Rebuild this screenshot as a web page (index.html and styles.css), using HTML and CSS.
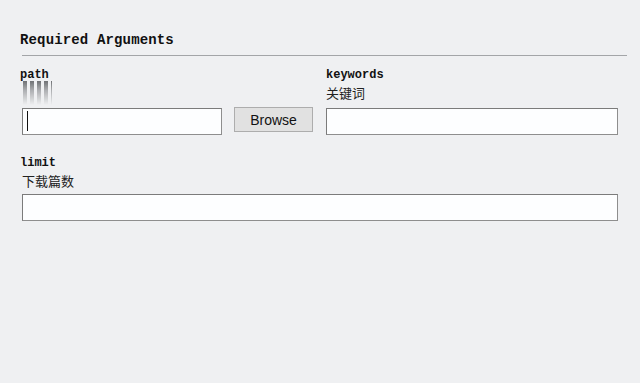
FILE: index.html
```html
<!DOCTYPE html>
<html>
<head>
<meta charset="utf-8">
<link rel="stylesheet" href="styles.css">
</head>
<body>
<div class="page">
  <div class="section-title">Required Arguments</div>
  <div class="rule"></div>
  <div class="row-top">
    <div class="field-head">
      <div class="label">path</div>
      <div class="smear"></div>
    </div>
    <div></div>
    <div class="field-head">
      <div class="label">keywords</div>
      <div class="help">关键词</div>
    </div>
    <div class="input-wrap">
      <input class="text-input" type="text">
      <span class="caret"></span>
    </div>
    <button class="browse">Browse</button>
    <input class="text-input" type="text">
  </div>
  <div class="row-limit">
    <div class="label">limit</div>
    <div class="help">下载篇数</div>
    <input class="text-input wide" type="text">
  </div>
</div>
</body>
</html>
```
FILE: styles.css
```css
html, body {
  margin: 0;
  padding: 0;
  background: #eff0f2;
}
.page {
  width: 640px;
  height: 383px;
  padding-top: 32px;
  box-sizing: border-box;
}
.section-title {
  margin-left: 20px;
  font-family: "Liberation Mono", monospace;
  font-weight: bold;
  font-size: 14px;
  line-height: 16px;
  letter-spacing: 0.15px;
  color: #111;
}
.rule {
  margin: 7px 13px 0 22px;
  height: 1px;
  background: #a3a5a8;
}
.row-top {
  margin: 12px 0 0 22px;
  display: grid;
  grid-template-columns: 200px 79px 292px;
  column-gap: 12px;
  grid-template-rows: 40px 27px;
  row-gap: 0;
}
.field-head {
  display: flex;
  flex-direction: column;
}
.row-top .field-head:nth-child(3) {
  margin-left: 1px;
}
.label {
  font-family: "Liberation Mono", monospace;
  font-weight: bold;
  font-size: 12px;
  line-height: 14px;
  color: #111;
  margin-left: -2px;
}
.row-top .field-head:nth-child(3) .label {
  margin-left: 0;
}
.help {
  margin-top: 3px;
  font-family: "Noto Sans CJK SC", "Noto Sans", sans-serif;
  font-size: 13px;
  line-height: 16px;
  color: #222;
}
.smear {
  width: 30px;
  height: 24px;
  margin-top: -1px;
  background: repeating-linear-gradient(90deg, #eff0f2 0 1px, #6f7174 1px 5px, #eff0f2 5px 7px);
  -webkit-mask-image: linear-gradient(180deg, rgba(0,0,0,1), rgba(0,0,0,0.5) 40%, rgba(0,0,0,0));
  mask-image: linear-gradient(180deg, rgba(0,0,0,1), rgba(0,0,0,0.5) 40%, rgba(0,0,0,0));
}
.input-wrap {
  position: relative;
}
.text-input {
  display: block;
  box-sizing: border-box;
  width: 100%;
  height: 27px;
  margin: 0;
  padding: 0 4px;
  border: 1px solid #7b7b7b;
  border-right-color: #8e8e8e;
  border-bottom-color: #8e8e8e;
  background: #fdfeff;
  outline: none;
}
.row-top > .text-input {
  width: 292px;
  margin-left: 1px;
}
.caret {
  position: absolute;
  left: 5px;
  top: 3px;
  width: 1px;
  height: 20px;
  background: #111;
}
.browse {
  align-self: start;
  margin: -1px 0 0 0;
  box-sizing: border-box;
  width: 79px;
  height: 25px;
  padding: 0;
  border: 1px solid #adadad;
  background: #e1e1e1;
  font-family: "Liberation Sans", Arial, sans-serif;
  font-size: 14px;
  color: #111;
}
.row-limit {
  margin: 21px 0 0 22px;
}
.row-limit .help {
  margin-bottom: 5px;
}
.wide {
  width: 596px;
}
```
